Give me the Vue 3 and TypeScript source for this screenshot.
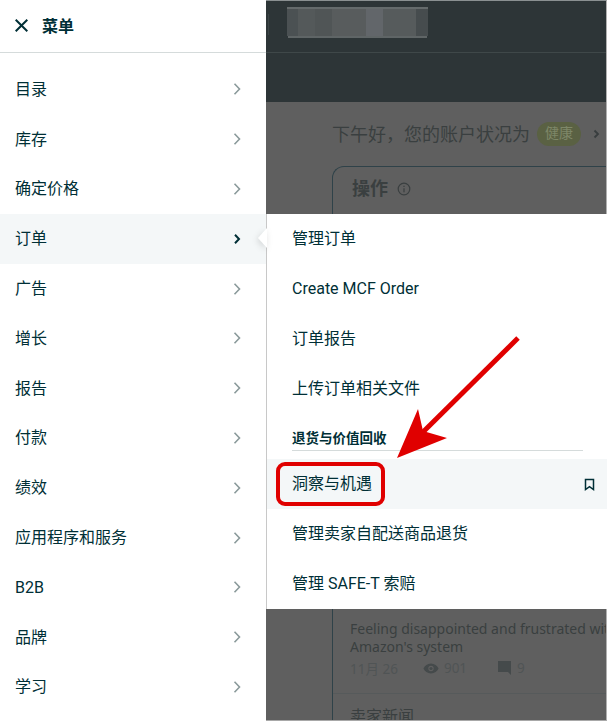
<script setup lang="ts">
interface NavItem {
  label: string;
  active?: boolean;
}

interface BlurCell {
  width: number;
  color: string;
}

const navItems: NavItem[] = [
  { label: '目录' },
  { label: '库存' },
  { label: '确定价格' },
  { label: '订单', active: true },
  { label: '广告' },
  { label: '增长' },
  { label: '报告' },
  { label: '付款' },
  { label: '绩效' },
  { label: '应用程序和服务' },
  { label: 'B2B' },
  { label: '品牌' },
  { label: '学习' },
];

const orderLinks = ['管理订单', 'Create MCF Order', '订单报告', '上传订单相关文件'];
const returnLinks = ['管理卖家自配送商品退货', '管理 SAFE-T 索赔'];

const blurCells: BlurCell[] = [
  { width: 11, color: '#4b5153' },
  { width: 17, color: '#54595a' },
  { width: 17, color: '#505556' },
  { width: 34, color: '#585c5d' },
  { width: 17, color: '#62666a' },
  { width: 33, color: '#565b5c' },
  { width: 12, color: '#464c4e' },
];

// Latin-only labels sit higher in the line box than CJK ones
const isLatin = (text: string) => /^[A-Za-z0-9 ]+$/.test(text);
</script>

<template>
  <div class="screen">
    <aside class="sidebar">
      <header class="sidebar-head">
        <svg class="close-icon" width="13" height="13" viewBox="0 0 13 13" aria-hidden="true">
          <path d="M0.700 0.700l11.600 11.600M12.300 0.700L0.700 12.300" />
        </svg>
        <span class="sidebar-title">菜单</span>
      </header>
      <nav class="nav-list">
        <div v-for="item in navItems" :key="item.label" class="nav-row" :class="{ 'nav-row--active': item.active }">
          <span class="nav-label" :class="{ 'is-latin': isLatin(item.label) }">{{ item.label }}</span>
          <svg class="chevron" width="8" height="12" viewBox="0 0 8 12" aria-hidden="true">
            <path v-if="item.active" d="M2 1.800l4 4.200-4 4.200" />
            <path v-else d="M1.500 0.800l5 5.200-5 5.200" />
          </svg>
        </div>
      </nav>
    </aside>

    <main class="page">
      <div class="topbar">
        <div class="topbar-row">
          <span class="topbar-divider"></span>
          <div class="blur-box">
            <i v-for="(c, i) in blurCells" :key="i" :style="{ width: c.width + 'px', background: c.color }" />
          </div>
        </div>
      </div>
      <div class="page-body">
        <div class="status-line">
          <span class="status-text">下午好，您的账户状况为</span>
          <span class="health">健康</span>
          <svg class="status-chevron" width="7" height="10" viewBox="0 0 7 10" aria-hidden="true">
            <path d="M1.500 1.500l3.500 3.500-3.500 3.500" />
          </svg>
        </div>
        <section class="action-card">
          <h2 class="action-title">
            <span>操作</span>
            <svg width="14" height="14" viewBox="0 0 14 14" aria-hidden="true">
              <circle cx="7" cy="7" r="5.800" />
              <path d="M7 6.200v4M7 3.800v1.200" />
            </svg>
          </h2>
          <div class="forum">
            <p class="forum-title">Feeling disappointed and frustrated with<br>Amazon's system</p>
            <div class="forum-meta">
              <span>11月 26</span>
              <span class="meta-item">
                <svg width="16" height="11" viewBox="0 0 18 12" aria-hidden="true">
                  <path class="meta-fill" fill-rule="evenodd" d="M9 0.500C5 0.500 2 3 0.500 6 2 9 5 11.500 9 11.500s7-2.500 8.500-5.500C16 3 13 0.500 9 0.500zM9 3a3 3 0 1 1 0 6 3 3 0 0 1 0-6z" />
                  <circle class="meta-fill" cx="9" cy="6" r="1.800" />
                </svg>
                901
              </span>
              <span class="meta-item meta-item--comment">
                <svg width="13" height="14" viewBox="0 0 13 14" aria-hidden="true">
                  <path class="meta-fill" d="M0 0h13v14l-3-3H0z" />
                </svg>
                9
              </span>
            </div>
          </div>
          <div class="forum-rule"></div>
          <p class="forum-next">卖家新闻</p>
        </section>
      </div>

      <div class="submenu">
        <span class="submenu-notch"></span>
        <a v-for="link in orderLinks" :key="link" class="sub-row">
          <span class="sub-label" :class="{ 'is-latin': isLatin(link) }">{{ link }}</span>
        </a>
        <div class="sub-heading">退货与价值回收</div>
        <a class="sub-row sub-row--active">
          <span class="sub-label">洞察与机遇</span>
          <svg class="bookmark" width="11" height="13" viewBox="0 0 11 13" aria-hidden="true">
            <path d="M1.500 1.500h8v10L5.500 8.700 1.500 11.500z" />
          </svg>
          <span class="callout"></span>
        </a>
        <a v-for="link in returnLinks" :key="link" class="sub-row"><span class="sub-label">{{ link }}</span></a>
      </div>

      <svg class="arrow" width="140" height="135" viewBox="0 0 140 135" aria-hidden="true">
        <path d="M132 8L34 105" class="arrow-line" />
        <path d="M11 128L32 79L37 101L61 108Z" class="arrow-head" />
      </svg>
    </main>
  </div>
</template>

<style>
html, body { margin: 0; background: #5f5f5f; }
</style>

<style scoped>
.screen {
  display: flex;
  width: 607px;
  height: 721px;
  overflow: hidden;
  font-family: Roboto, "Noto Sans CJK SC", sans-serif;
  color: #002f36;
}

.sidebar {
  flex: 0 0 266px;
  background: #fff;
  display: flex;
  flex-direction: column;
}

.sidebar-head {
  height: 53px;
  display: flex;
  align-items: center;
  padding: 0 0 1px 15px;
  box-sizing: border-box;
  gap: 14px;
  border-bottom: 1px solid #d5dbdb;
}

.close-icon path {
  fill: none;
  stroke: #002f36;
  stroke-width: 2;
}

.sidebar-title {
  font-size: 16px;
  font-weight: 700;
  margin-top: -2px;
}

.nav-list {
  padding-top: 12px;
}

.nav-row {
  height: 49.800px;
  display: flex;
  align-items: center;
  justify-content: space-between;
  padding: 0 25px 0 15px;
  font-size: 16px;
}

.nav-label {
  margin-top: -4px;
}

.nav-label.is-latin {
  margin-top: 0;
}

.nav-row--active {
  background: #f4f7f8;
}

.chevron {
  margin-top: -1px;
}

.chevron path {
  fill: none;
  stroke: #8b9a9b;
  stroke-width: 1.600;
}

.nav-row--active .chevron path {
  stroke: #002f36;
  stroke-width: 2;
}

.page {
  position: relative;
  flex: 1;
  min-width: 0;
  background: #5f5f5f;
  box-sizing: border-box;
  border-top: 1px solid #8a9091;
  border-right: 1px solid #b0b0b0;
  border-bottom: 1px solid #a8a8a8;
}

.topbar {
  height: 101px;
  background: #2d3537;
}

.topbar-row {
  height: 52px;
  border-bottom: 1px solid #3f4849;
  padding: 6px 0 0 2px;
  box-sizing: border-box;
  display: flex;
  align-items: flex-start;
}

.topbar-divider {
  width: 1px;
  height: 21px;
  margin-top: 7px;
  background: #3b4446;
}

.blur-box {
  display: flex;
  margin-left: 18px;
  height: 29px;
  border-top: 2px solid #656b6c;
  box-sizing: border-box;
  box-shadow: 0 3px 0 -1px #5f6566;
}

.blur-box i {
  display: block;
  height: 100%;
}

.page-body {
  padding: 20px 0 0 66px;
  color: #3a3f40;
  overflow: hidden;
  height: 618px;
  box-sizing: border-box;
}

.status-line {
  display: flex;
  align-items: center;
  font-size: 18px;
  height: 24px;
  white-space: nowrap;
}

.status-text {
  margin-top: -2px;
}

.health {
  margin-left: 7px;
  background: #5a6143;
  color: #7e8768;
  border-radius: 12px;
  font-size: 14px;
  width: 44px;
  height: 24px;
  line-height: 23px;
  text-align: center;
}

.status-chevron {
  margin-left: 12px;
}

.status-chevron path {
  fill: none;
  stroke: #383d3e;
  stroke-width: 1.800;
}

.action-card {
  margin-top: 20px;
  height: 560px;
  border: 1px solid #2f4249;
  border-right: 0;
  border-radius: 12px 0 0 0;
}

.action-title {
  margin: 0;
  padding: 9px 0 0 19px;
  font-size: 18px;
  font-weight: 700;
  line-height: 26px;
  display: flex;
  align-items: center;
  gap: 9px;
}

.action-title svg {
  fill: none;
  stroke: #3a3f40;
  stroke-width: 1.200;
}

.forum {
  margin-top: 418px;
  padding-left: 17px;
}

.forum-title {
  margin: 0;
  font-family: "Noto Sans", sans-serif;
  font-size: 14px;
  line-height: 18px;
  white-space: nowrap;
  color: #3a3f40;
}

.forum-meta {
  display: flex;
  align-items: center;
  font-family: "Noto Sans", "Noto Sans CJK SC", sans-serif;
  font-size: 13.500px;
  color: #505455;
  margin-top: 3px;
  height: 18px;
}

.meta-item {
  display: flex;
  align-items: center;
  gap: 5px;
  margin-left: 25px;
}

.meta-item--comment {
  margin-left: 31px;
  gap: 6px;
}

.meta-fill {
  fill: #454a4b;
}

.forum-rule {
  border-top: 1px solid #565a5b;
  margin-top: 16px;
}

.forum-next {
  margin: 13px 0 0 17px;
  font-size: 16px;
  line-height: 20px;
  color: #3a3f40;
}

.submenu {
  position: absolute;
  top: 213px;
  left: 0;
  right: -1px;
  background: #fff;
  color: #002f36;
  border-left: 1px solid #c8c8c8;
}

.submenu-notch {
  position: absolute;
  left: -9px;
  top: 14px;
  filter: drop-shadow(-1px 2px 3px rgba(0, 0, 0, 0.14));
}

.submenu-notch::before {
  content: "";
  display: block;
  width: 9px;
  height: 20px;
  background: #fff;
  clip-path: polygon(100% 0, 0 50%, 100% 100%);
}

.sub-row {
  position: relative;
  display: flex;
  align-items: center;
  justify-content: space-between;
  height: 50px;
  padding: 0 12px 0 25px;
  font-size: 16px;
}

.sub-label {
  margin-top: -4px;
}

.sub-label.is-latin {
  margin-top: -1px;
}

.sub-row--active {
  background: #f4f7f8;
}

.sub-heading {
  margin: 0 24px 8px 25px;
  height: 37px;
  box-sizing: border-box;
  padding-top: 15px;
  font-size: 13.500px;
  font-weight: 700;
  line-height: 18px;
  border-bottom: 1px solid #d5dbdb;
}

.bookmark path {
  fill: none;
  stroke: #002f36;
  stroke-width: 1.500;
}

.callout {
  position: absolute;
  left: 9px;
  top: 3px;
  width: 109px;
  height: 44px;
  box-sizing: border-box;
  border: 4.500px solid #e00000;
  border-radius: 9px;
}

.arrow {
  position: absolute;
  left: 120px;
  top: 329px;
  overflow: visible;
}

.arrow-line {
  fill: none;
  stroke: #e00000;
  stroke-width: 5;
}

.arrow-head {
  fill: #e00000;
}
</style>
